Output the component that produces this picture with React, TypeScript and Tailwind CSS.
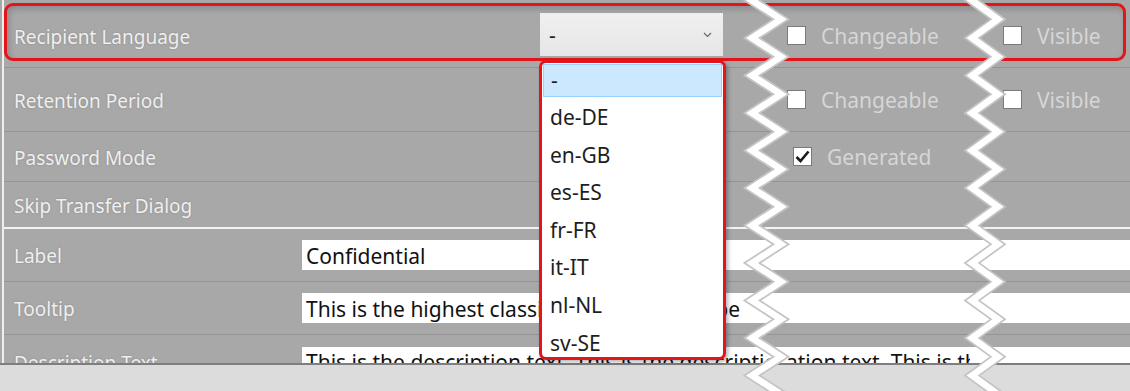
import React from 'react';

const FONT = { fontFamily: '"Noto Sans", "Open Sans", sans-serif' };

const zigzag = (left: number, right: number) => {
  const pts: string[] = [];
  const period = 37.5;
  for (let k = -2; k < 12; k++) {
    const y = 38 + k * period;
    pts.push(`${left},${y}`);
    pts.push(`${right},${y + period / 2}`);
  }
  return pts.join(' ');
};

function Check({ checked }: { checked?: boolean }) {
  return (
    <span className="w-[19px] h-[19px] bg-white border border-[#7a7a7a] flex items-center justify-center shrink-0">
      {checked && (
        <svg width="15" height="13" viewBox="0 0 15 13">
          <path d="M1.5 7 L5.5 11 L13.5 1.5" fill="none" stroke="#1c1c1c" strokeWidth="2.6" />
        </svg>
      )}
    </span>
  );
}

function Label({ children, w }: { children: React.ReactNode; w: string }) {
  return (
    <div className={`${w} shrink-0 pl-[10px] pt-[3px] text-[19px] text-[#efefef] [text-shadow:0_0_2px_rgba(80,80,80,0.35)]`}>{children}</div>
  );
}

function Option({ label, w }: { label: string; w?: string }) {
  return (
    <div className={`${w ?? ''} flex items-center gap-[15px] text-[21px] text-[#d6d6d6]`}>
      <Check />
      <span className="pt-[3px]">{label}</span>
    </div>
  );
}

export default function App() {
  const langs = ['de-DE', 'en-GB', 'es-ES', 'fr-FR', 'it-IT', 'nl-NL', 'sv-SE'];
  return (
    <div className="w-[1130px] h-[391px] relative overflow-hidden bg-[#dcdcdc]" style={FONT}>
      <div className="h-[365px] bg-[#a8a8a8] pl-[2px] border-b-2 border-[#7e7e7e]">
        <div className="h-full border-l-2 border-[#efefef] overflow-hidden flex flex-col">
          {/* recipient language */}
          <div className="h-[68px] shrink-0 border-b border-[#949494] flex items-center pt-[4px]">
            <Label w="w-[536px]">Recipient Language</Label>
            <div className="w-[183px] h-[43px] bg-gradient-to-b from-[#f0f0f0] to-[#e6e6e6] flex items-center justify-between pl-[9px] pr-[11px] -mt-[2px]">
              <span className="text-[21px] text-[#222] pt-[2px]">-</span>
              <svg width="9" height="6" viewBox="0 0 9 6">
                <path d="M1 1 L4.5 4.5 L8 1" fill="none" stroke="#666" strokeWidth="1.2" />
              </svg>
            </div>
            <Option label="Changeable" w="ml-[64px] w-[216px]" />
            <Option label="Visible" />
          </div>
          {/* retention */}
          <div className="h-[64px] shrink-0 border-b border-[#949494] flex items-center">
            <Label w="w-[783px]">Retention Period</Label>
            <Option label="Changeable" w="w-[216px]" />
            <Option label="Visible" />
          </div>
          {/* password */}
          <div className="h-[50px] shrink-0 border-b border-[#949494] flex items-center">
            <Label w="w-[789px]">Password Mode</Label>
            <div className="flex items-center gap-[15px] text-[21px] text-[#d6d6d6]">
              <Check checked />
              <span className="pt-[3px]">Generated</span>
            </div>
          </div>
          {/* skip */}
          <div className="h-[47px] shrink-0 border-b-2 border-[#f4f4f4] flex items-center">
            <Label w="w-[300px]">Skip Transfer Dialog</Label>
          </div>
          {/* label */}
          <div className="h-[53px] shrink-0 border-b border-[#949494] flex items-center">
            <Label w="w-[298px]">Label</Label>
            <div className="flex-1 h-[30px] bg-white flex items-center pl-[4px] pt-[3px] text-[21px] text-[#111]">Confidential</div>
          </div>
          {/* tooltip */}
          <div className="h-[53px] shrink-0 border-b border-[#949494] flex items-center">
            <Label w="w-[298px]">Tooltip</Label>
            <div className="flex-1 h-[30px] bg-white flex items-center pl-[4px] pt-[3px] text-[21px] text-[#111] whitespace-nowrap overflow-hidden">
              This is the highest classification and shall be
            </div>
          </div>
          {/* description */}
          <div className="h-[53px] shrink-0 flex items-center">
            <Label w="w-[298px]">Description Text</Label>
            <div className="flex-1 h-[30px] bg-white flex items-center pt-[3px] text-[21px] text-[#111] whitespace-nowrap overflow-hidden">
              <div className="w-[468px] pl-[4px] overflow-hidden">This is the description text. This is the description text.</div>
              <div className="w-[200px] pl-[16px] overflow-hidden">ation text. This is the description</div>
              <div className="flex-1" />
            </div>
          </div>
        </div>
      </div>
      <div className="h-[26px]" />

      {/* highlight around first row */}
      <div className="absolute left-[4px] top-[3px] w-[1122px] h-[58px] rounded-[9px] border-[3px] border-[#e3141b] shadow-[inset_2px_3px_6px_rgba(0,0,0,0.18)] pointer-events-none" />

      {/* torn edges */}
      <svg className="absolute inset-0 pointer-events-none" width="1130" height="391" viewBox="0 0 1130 391">
        <polyline points={zigzag(752, 781)} fill="none" stroke="#c4c4c4" strokeWidth="10" />
        <polyline points={zigzag(752, 781)} fill="none" stroke="#ffffff" strokeWidth="6.5" />
        <polyline points={zigzag(972, 998)} fill="none" stroke="#c4c4c4" strokeWidth="10" />
        <polyline points={zigzag(972, 998)} fill="none" stroke="#ffffff" strokeWidth="6.5" />
      </svg>

      {/* open dropdown */}
      <div className="absolute left-[539px] top-[60px] w-[187px] h-[300px] bg-white rounded-[7px] border-[3px] border-[#e3141b] shadow-[2px_2px_4px_rgba(0,0,0,0.3)] text-[21px] text-[#1e1e1e]">
        <div className="mt-[1px] mx-[1px] h-[33px] bg-[#cce8ff] border border-[#99d1ff] flex items-center pl-[7px]">-</div>
        <div className="mt-[2px]">
          {langs.map(l => (
            <div key={l} className="h-[37.6px] flex items-center pl-[8px]">{l}</div>
          ))}
        </div>
      </div>
    </div>
  );
}
